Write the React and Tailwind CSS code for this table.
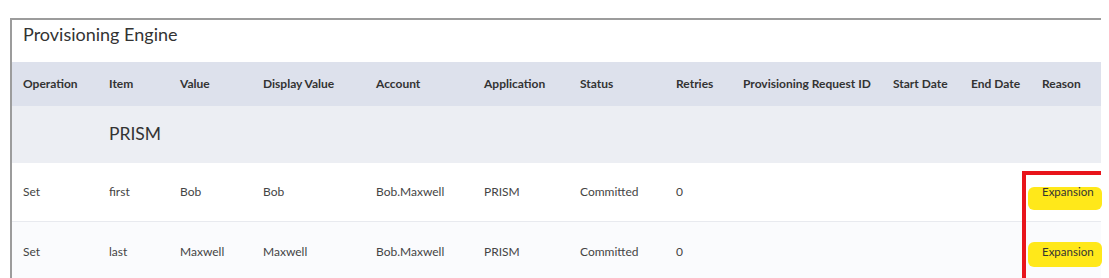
import React from 'react';

const columns = [
  { label: 'Operation', w: 'w-[86px]' },
  { label: 'Item', w: 'w-[71px]' },
  { label: 'Value', w: 'w-[83px]' },
  { label: 'Display Value', w: 'w-[113px]' },
  { label: 'Account', w: 'w-[108px]' },
  { label: 'Application', w: 'w-[96px]' },
  { label: 'Status', w: 'w-[96px]' },
  { label: 'Retries', w: 'w-[67px]' },
  { label: 'Provisioning Request ID', w: 'w-[150px]' },
  { label: 'Start Date', w: 'w-[78px]' },
  { label: 'End Date', w: 'w-[71px]' },
  { label: 'Reason', w: 'w-[59px]' },
];

const rows = [
  {
    cells: ['Set', 'first', 'Bob', 'Bob', 'Bob.Maxwell', 'PRISM', 'Committed', '0', '', '', '', 'Expansion'],
    bg: 'bg-white border-b border-[#e8eaef]',
    mark: 'top-[24px] h-[23px]',
  },
  {
    cells: ['Set', 'last', 'Maxwell', 'Maxwell', 'Bob.Maxwell', 'PRISM', 'Committed', '0', '', '', '', 'Expansion'],
    bg: 'bg-[#fafbfd]',
    mark: 'top-[20px] h-[25px]',
  },
];

function App() {
  return (
    <div className="w-[1109px] h-[278px] bg-white overflow-hidden pt-[18px] pl-[10px]" style={{ fontFamily: 'Lato, "Open Sans", sans-serif' }}>
      <div className="relative w-[1091px] border-l-2 border-t-2 border-[#9c9c9c]">
        <div className="h-[42px] pt-[1px] pl-[11px] text-[18px] text-[#333]">Provisioning Engine</div>

        <div className="h-[44px] flex items-center pl-[11px] bg-[#dde1ec]">
          {columns.map((c) => (
            <div key={c.label} className={`${c.w} shrink-0 text-[12px] font-bold text-[#333] whitespace-nowrap`}>{c.label}</div>
          ))}
        </div>

        <div className="h-[57px] flex items-center pl-[97px] bg-[#eceef3] text-[17.5px] text-[#333]">PRISM</div>

        {rows.map((r, i) => (
          <div key={i} className={`relative h-[59px] flex items-center pl-[11px] ${r.bg}`}>
            {/* highlighter mark behind the reason text */}
            <div className={`absolute left-[1016px] w-[74px] ${r.mark} bg-[#ffe81a] rounded-[6px]`} />
            {r.cells.map((v, j) => (
              <div key={j} className={`${columns[j].w} relative shrink-0 whitespace-nowrap ${j === 11 ? 'text-[11.5px] text-[#333]' : 'text-[12px] text-[#444]'}`}>
                {v}
              </div>
            ))}
          </div>
        ))}

        <div className="absolute left-[1010px] top-[151px] w-[79px] h-[120px] border-l-4 border-t-4 border-[#e8141b]" />
      </div>
    </div>
  );
}

export default App;
